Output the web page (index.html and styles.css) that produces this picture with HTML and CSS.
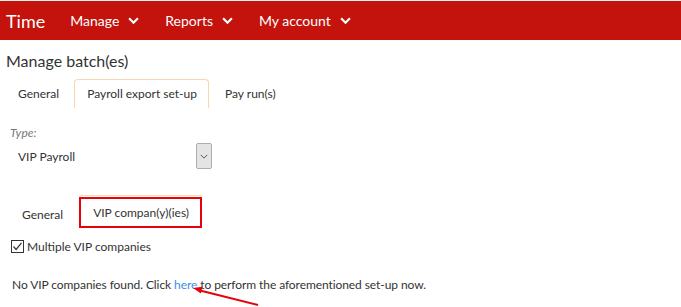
FILE: index.html
```html
<!DOCTYPE html>
<html lang="en">
<head>
  <meta charset="UTF-8">
  <title>Time | Manage batch(es)</title>
  <link rel="stylesheet" href="styles.css">
</head>
<body>

  <!-- Top bar -->
  <header class="topbar">
    <span class="brand">Time</span>
    <nav class="menu">
      <span class="menu-item">Manage <svg class="chev" viewBox="0 0 10 6"><path d="M1 1l4 4 4-4" /></svg></span>
      <span class="menu-item">Reports <svg class="chev" viewBox="0 0 10 6"><path d="M1 1l4 4 4-4" /></svg></span>
      <span class="menu-item">My account <svg class="chev" viewBox="0 0 10 6"><path d="M1 1l4 4 4-4" /></svg></span>
    </nav>
  </header>

  <main class="page">
    <h1>Manage batch(es)</h1>

    <div class="tabs">
      <span class="tab">General</span>
      <span class="tab active">Payroll export set-up</span>
      <span class="tab">Pay run(s)</span>
    </div>

    <div class="field">
      <label class="field-label">Type:</label>
      <div class="select">
        <span class="select-value">VIP Payroll</span>
        <span class="select-btn"><svg viewBox="0 0 10 6"><path d="M1 1l4 4 4-4" /></svg></span>
      </div>
    </div>

    <div class="tabs sub">
      <span class="tab">General</span>
      <span class="tab active"><span class="mark">VIP compan(y)(ies)</span></span>
    </div>

    <label class="check"><span class="box"><svg viewBox="0 0 11 11"><path d="M1.5 5.5l2.6 3L9.5 1.8" /></svg></span>Multiple VIP companies</label>

    <p class="notice">No VIP companies found. Click <span class="pointer"><a href="#">here</a><svg class="arrow" viewBox="0 0 70 22"><path d="M67 19 9 4.5" /><path class="head" d="M2 2l9.5 -1.3 -1.6 6.8z" /></svg></span> to perform the aforementioned set-up now.</p>
  </main>

</body>
</html>
```

FILE: styles.css
```css
html {
  height: 100%;
}

body {
  margin: 0;
  min-height: 100%;
  box-sizing: border-box;
  font-family: Lato, "Liberation Sans", sans-serif;
  color: #333;
  background: #fff;
  border-top: 1px solid #eee;
}

.topbar {
  display: flex;
  align-items: center;
  height: 39px;
  background: #c4120c;
  color: #fff;
}

.brand {
  font-size: 18px;
  margin-left: 6px;
  margin-right: 25px;
}

.menu {
  display: flex;
  gap: 26px;
}

.menu-item {
  display: flex;
  align-items: center;
  gap: 9px;
  font-size: 14px;
}

.chev {
  width: 11px;
  height: 7px;
  fill: none;
  stroke: #fff;
  stroke-width: 2;
}

.page {
  padding: 0 6px;
}

h1 {
  font-size: 16px;
  font-weight: normal;
  margin: 11px 0 9px;
}

.tabs {
  display: flex;
  font-size: 12px;
  height: 29px;
}

.tab {
  padding: 6px 14px 0 0;
  border: 1px solid transparent;
  border-bottom: none;
  border-radius: 4px 4px 0 0;
}

.tabs .tab:first-child {
  padding-left: 11px;
}

.tab.active {
  border-color: #fad6b0;
  padding: 6px 11px 0 12px;
  margin-right: 4px;
}

.tabs .tab:last-child {
  padding-left: 11px;
}

.field {
  margin-top: 17px;
  padding-left: 4px;
}

.field-label {
  display: block;
  font-size: 12px;
  font-style: italic;
  color: #777;
}

.select {
  display: flex;
  align-items: center;
  justify-content: space-between;
  width: 202px;
  margin-top: 3px;
}

.select-value {
  font-size: 12px;
  padding-left: 8px;
}

.select-btn {
  display: flex;
  align-items: center;
  justify-content: center;
  width: 14px;
  height: 24px;
  background: #e4e4e4;
  border: 1px solid #adadad;
  border-radius: 2px;
}

.select-btn svg {
  width: 8px;
  height: 5px;
  fill: none;
  stroke: #555;
  stroke-width: 1.2;
}

.tabs.sub {
  margin-top: 26px;
  height: auto;
}

.tabs.sub .tab {
  padding: 11px 14px 0 15px;
}

.tabs.sub .tab.active {
  padding: 1px 0 0;
  border-left-color: transparent;
  border-right-color: transparent;
}

.mark {
  display: block;
  padding: 6px 11px 6px 12px;
  border: 2px solid #e8000b;
}

.check {
  display: flex;
  align-items: center;
  gap: 3px;
  font-size: 12px;
  margin-top: 11px;
}

.box {
  display: flex;
  width: 11px;
  height: 11px;
  border: 1px solid #333;
  margin-left: 5px;
}

.box svg {
  width: 11px;
  height: 11px;
  fill: none;
  stroke: #333;
  stroke-width: 1.2;
}

.notice {
  font-size: 12px;
  letter-spacing: -0.08px;
  margin: 23px 0 0 6px;
}

.pointer {
  position: relative;
}

.notice a {
  color: #3a8ee6;
  text-decoration: none;
}

.arrow {
  position: absolute;
  left: 17px;
  top: 9px;
  width: 70px;
  height: 22px;
  overflow: visible;
}

.arrow path {
  fill: none;
  stroke: #e8000b;
  stroke-width: 2;
}

.arrow path.head {
  fill: #e8000b;
  stroke: none;
}
```
